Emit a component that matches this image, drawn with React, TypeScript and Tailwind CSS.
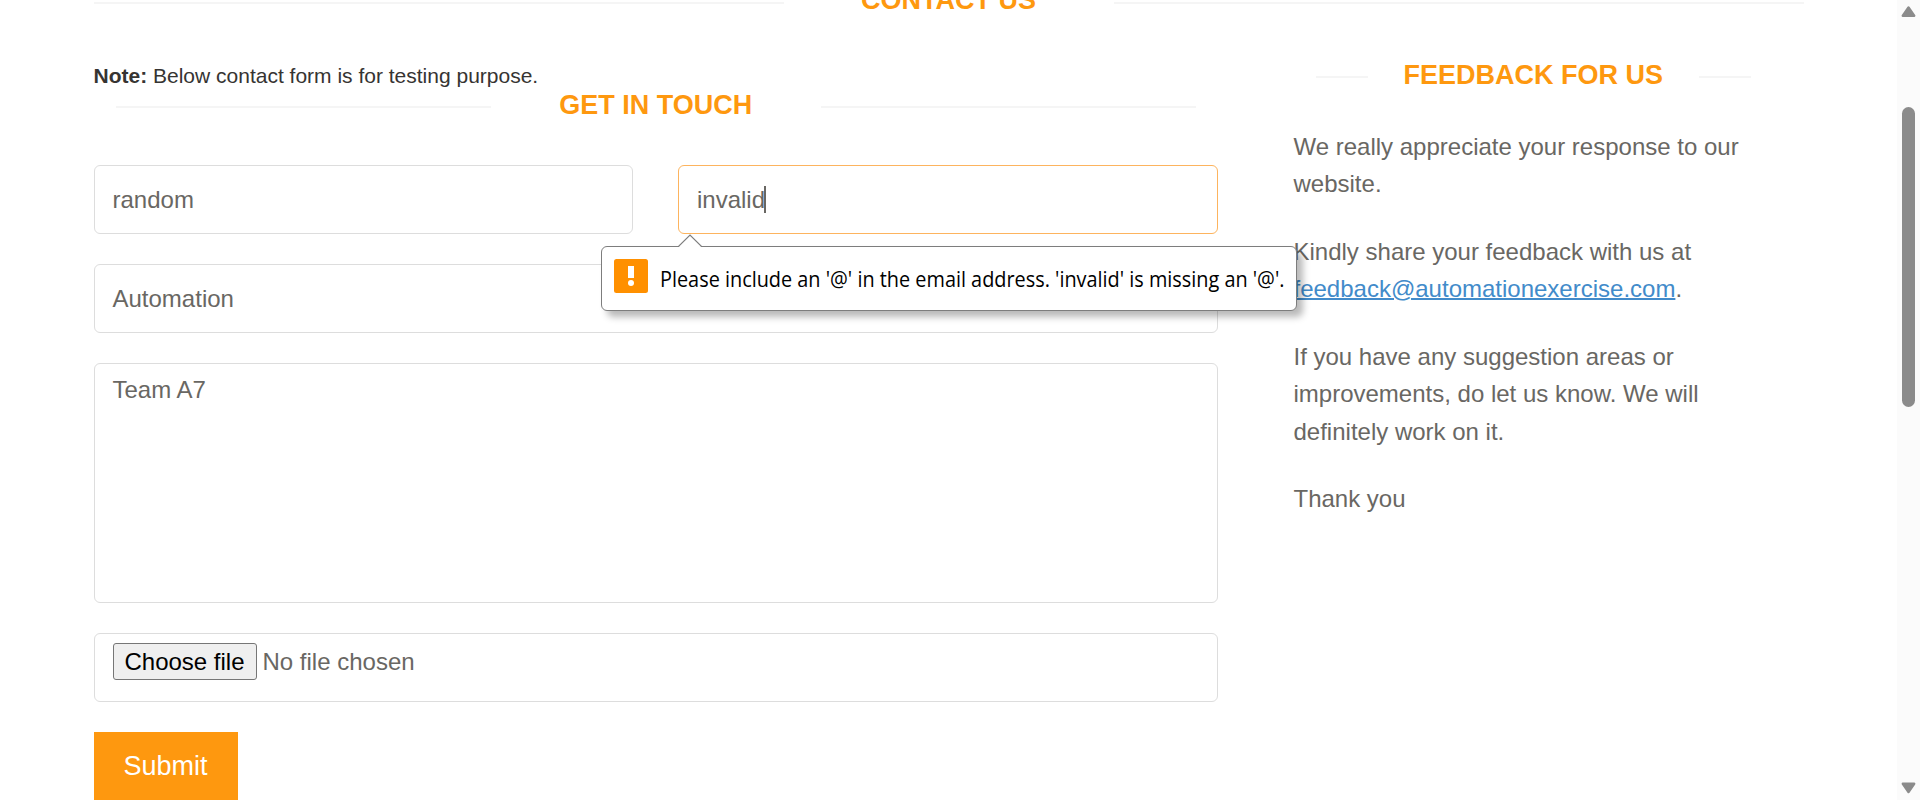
import type { ReactNode } from "react";

const box = "flex rounded-[6px] border border-[#dddddd] bg-white px-[18px] text-[24px] leading-[34px]";

function Heading({ children, className, line }: { children: ReactNode; className: string; line: string }) {
  return (
    <div className={`flex items-center justify-between ${className}`}>
      <span className={`h-[2px] bg-[#f5f5f5] ${line}`} />
      <h2 className="text-[27px] font-bold leading-[30px] whitespace-nowrap text-[#fe980f]">{children}</h2>
      <span className={`h-[2px] bg-[#f5f5f5] ${line}`} />
    </div>
  );
}

function Bubble() {
  return (
    <div className="absolute top-[81px] left-[-77px] z-10 flex h-[65px] w-[696px] items-center rounded-[6px] border border-[#7d7d7d] bg-white pl-[12px] shadow-[6px_6px_7px_rgba(0,0,0,0.28)]">
      <svg className="absolute top-[-13px] left-[75px]" width="26" height="14" viewBox="0 0 26 14">
        <path d="M1.5 13 L13 1.2 L24.5 13 V14 H1.5Z" fill="#fff" />
        <path d="M1 12.5 L1.5 12.5 L13 1 L24.5 12.5 H25" fill="none" stroke="#7d7d7d" strokeWidth="1.2" />
      </svg>
      <svg className="mb-[5px] shrink-0" width="34" height="34" viewBox="0 0 34 34">
        <rect width="34" height="34" rx="2.5" fill="#ff9000" />
        <rect x="14" y="7" width="6" height="12" fill="#fff" />
        <circle cx="17" cy="24" r="3" fill="#fff" />
      </svg>
      <span className="ml-[12px] origin-left scale-x-[0.946] font-['Open_Sans',sans-serif] text-[21px] leading-[30px] whitespace-nowrap text-black">
        Please include an '@' in the email address. 'invalid' is missing an '@'.
      </span>
    </div>
  );
}

export default function App() {
  return (
    <div className="flex h-[800px] w-[1920px] overflow-hidden bg-white font-['Liberation_Sans',Arial,sans-serif] text-[#696763]">
      <main className="w-[1897px] pl-[93.5px]">
        <Heading className="-mt-[15px] h-[30px] w-[1710px]" line="w-[690px] mt-[6px]">CONTACT US</Heading>
        <div className="flex items-start gap-[76px]">
          <section className="w-[1124px]">
            <p className="mt-[46px] text-[21px] leading-[30px] text-[#363432]">
              <b>Note:</b> Below contact form is for testing purpose.
            </p>
            <Heading className="mr-[21.5px] ml-[22px] -mt-px h-[30px]" line="w-[375px] mt-[4px]">GET IN TOUCH</Heading>
            <form className="mt-[45px] flex flex-col gap-[30px]">
              <div className="flex gap-[45px]">
                <div className={`${box} h-[69px] w-[539px] items-center`}>random</div>
                <div className="relative w-[540px]">
                  <div className="flex h-[69px] items-center rounded-[6px] border border-[#fdb45e] bg-white px-[18.5px] text-[24px] leading-[34px]">
                    invalid
                    <span className="-ml-px h-[27px] w-[2px] bg-[#696763]" />
                  </div>
                  <Bubble />
                </div>
              </div>
              <div className={`${box} h-[69px] items-center`}>Automation</div>
              <div className={`${box} h-[240px] pt-[9px]`}>Team A7</div>
              <div className={`${box} h-[69px] items-start pt-[9px]`}>
                <button type="button" className="h-[37px] w-[144px] rounded-[3px] border border-[#767676] bg-[#efefef] text-[24px] leading-[35px] whitespace-nowrap text-black">
                  Choose file
                </button>
                <span className="ml-[6px] leading-[37px]">No file chosen</span>
              </div>
              <button type="button" className="h-[69px] w-[144px] bg-[#fe980f] text-[27px] leading-[67px] text-white">
                Submit
              </button>
            </form>
          </section>
          <aside className="w-[480px] pt-[45px]">
            <Heading className="ml-[22px] h-[30px] w-[435.5px]" line="w-[52px] mt-[4px]">FEEDBACK FOR US</Heading>
            <div className="mt-[37.75px] flex flex-col gap-[30px] text-[24px] leading-[37.5px]">
              <p>We really appreciate your response to our website.</p>
              <p>
                Kindly share your feedback with us at{" "}
                <a className="text-[#428bca] underline decoration-2">feedback@automationexercise.com</a>.
              </p>
              <p>If you have any suggestion areas or improvements, do let us know. We will definitely work on it.</p>
              <p>Thank you</p>
            </div>
          </aside>
        </div>
      </main>
      <div className="flex w-[23px] flex-col items-center bg-[#fbfbfb]">
        <svg className="mt-[6px]" width="15" height="12" viewBox="0 0 15 12">
          <path d="M7.5 1.5 L13.2 9.8 H1.8Z" fill="#8b8b8b" stroke="#8b8b8b" strokeWidth="2.4" strokeLinejoin="round" />
        </svg>
        <div className="mt-[89px] h-[300px] w-[13px] rounded-full bg-[#8b8b8b]" />
        <svg className="mt-[375px]" width="15" height="12" viewBox="0 0 15 12">
          <path d="M7.5 10 L13.2 1.7 H1.8Z" fill="#8b8b8b" stroke="#8b8b8b" strokeWidth="2.4" strokeLinejoin="round" />
        </svg>
      </div>
    </div>
  );
}
